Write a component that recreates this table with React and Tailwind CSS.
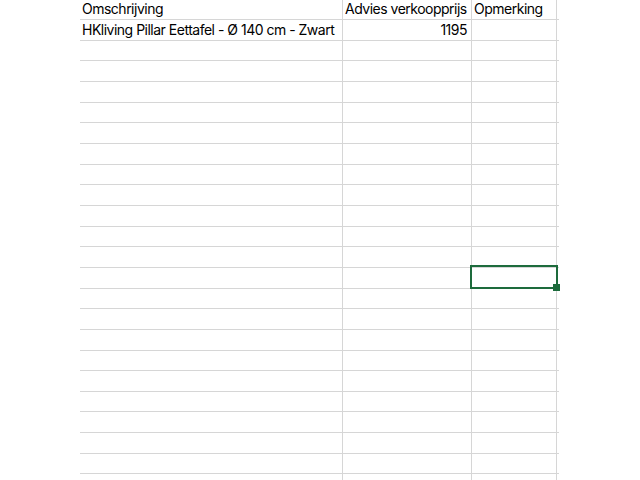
const rows = [
  { desc: 'HKliving Pillar Eettafel - Ø 140 cm - Zwart', price: '1195', note: '' },
  ...Array.from({ length: 23 }, () => ({ desc: '', price: '', note: '' })),
];

const SELECTED_ROW = 12;

function Cell({ children, align = 'left', last = false, selected = false }) {
  return (
    <div
      className={`relative flex items-end overflow-visible whitespace-nowrap px-[2px] pb-[1px] ${
        last ? '' : 'border-r border-[#d6d6d6]'
      } ${align === 'right' ? 'justify-end pr-[4px]' : ''}`}
    >
      {children}
      {selected && (
        <div className="pointer-events-none absolute -left-[2px] -top-[3px] z-10 h-[24px] w-[88px] border-2 border-[#1d6b3c]">
          <div className="absolute -bottom-[4px] -right-[4px] h-[7px] w-[7px] bg-[#1d6b3c]" />
        </div>
      )}
    </div>
  );
}

export default function App() {
  return (
    <div
      className="h-[480px] w-[640px] overflow-hidden bg-white text-[14px] tracking-[-0.5px] text-black"
      style={{ fontFamily: 'Inter, "Open Sans", sans-serif' }}
    >
      <div className="ml-[80px] w-[479px]">
        <div className="grid h-[20px] grid-cols-[263px_129px_85px_2px] border-b border-[#d6d6d6] leading-[18px]">
          <Cell>Omschrijving</Cell>
          <Cell>Advies verkoopprijs</Cell>
          <Cell>Opmerking</Cell>
          <Cell last />
        </div>
        {rows.map((row, i) => (
          <div
            key={i}
            className="grid h-[20.67px] grid-cols-[263px_129px_85px_2px] border-b border-[#d6d6d6] leading-[18px]"
          >
            <Cell>{row.desc}</Cell>
            <Cell align="right">{row.price}</Cell>
            <Cell selected={i === SELECTED_ROW}>{row.note}</Cell>
            <Cell last />
          </div>
        ))}
      </div>
    </div>
  );
}
